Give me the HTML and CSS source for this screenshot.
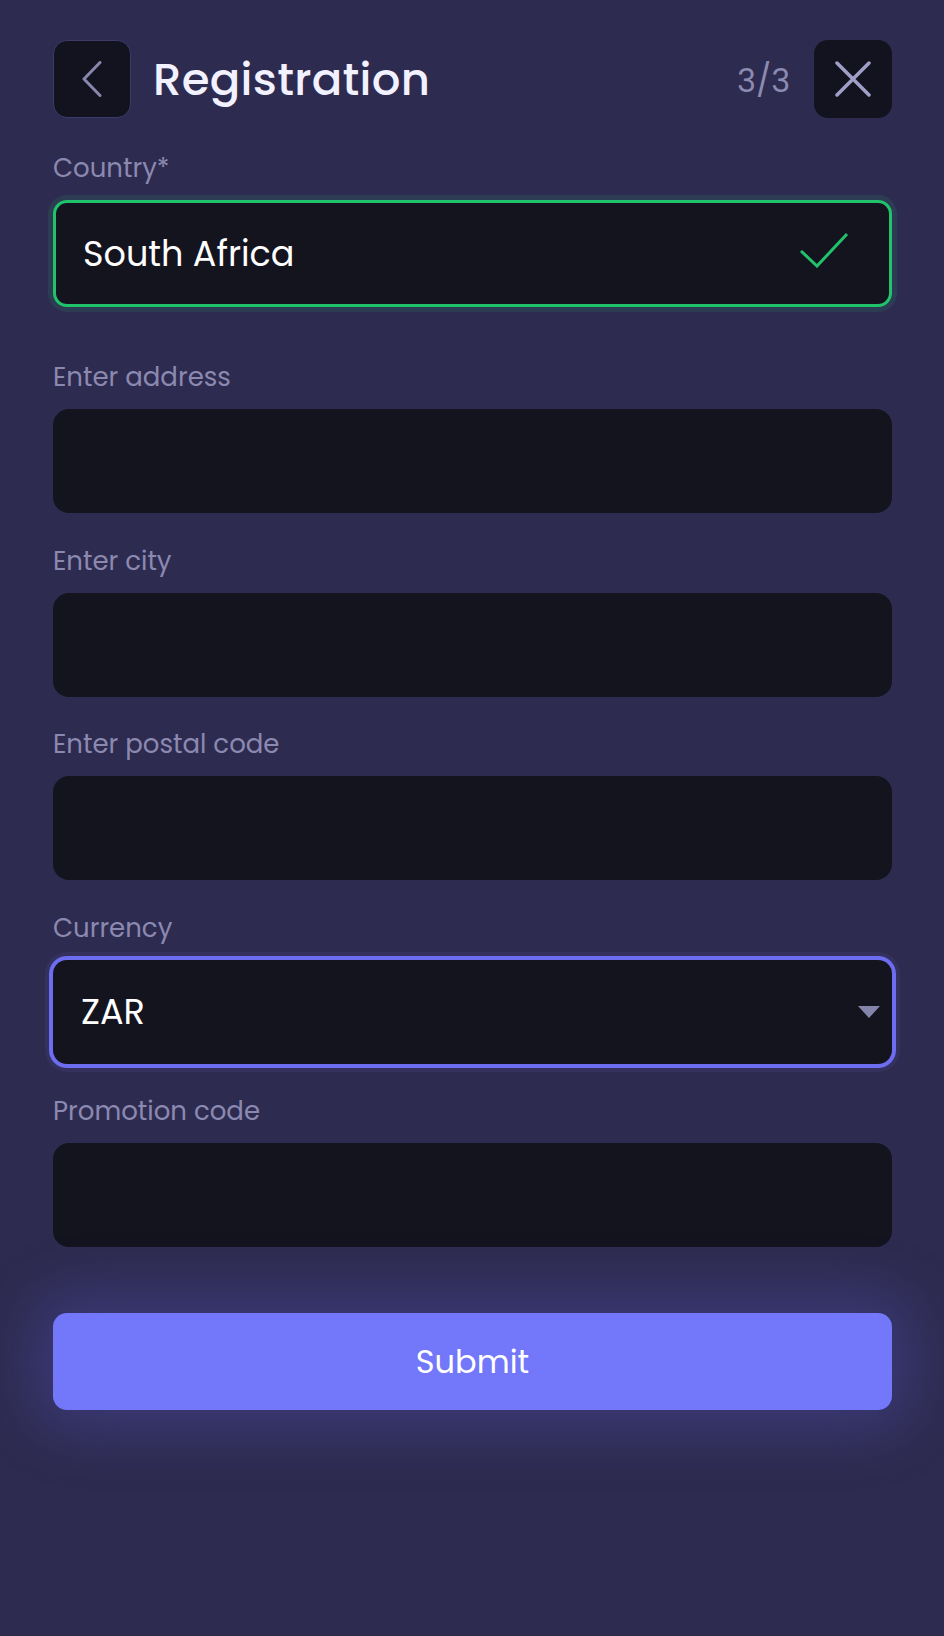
FILE: index.html
```html
<!DOCTYPE html>
<html lang="en">
<head>
    <meta charset="UTF-8">
    <meta name="viewport" content="width=device-width, initial-scale=1.0">
    <title>Registration</title>
    <link rel="stylesheet" href="styles.css">
</head>
<body>
    <div class="page">
        <header class="top-bar">
            <button class="icon-btn back-btn" type="button" aria-label="Back">
                <svg width="20" height="36" viewBox="0 0 20 36"><polyline points="18,1.5 2,18 18,34.5" fill="none" stroke="#8786ad" stroke-width="3" stroke-linecap="round" stroke-linejoin="round"/></svg>
            </button>
            <h1>Registration</h1>
            <span class="step">3/3</span>
            <button class="icon-btn close-btn" type="button" aria-label="Close">
                <svg width="36" height="36" viewBox="0 0 36 36"><path d="M2 2 L34 34 M34 2 L2 34" fill="none" stroke="#a09fc8" stroke-width="3.5" stroke-linecap="round"/></svg>
            </button>
        </header>

        <form id="registration-form">
            <div class="form-group country-group">
                <label for="country">Country*</label>
                <div class="field field-valid">
                    <input type="text" id="country" name="country" value="South Africa">
                    <svg class="check" width="50" height="36" viewBox="0 0 50 36"><polyline points="2,19 18,34 48,2" fill="none" stroke="#20c36c" stroke-width="3"/></svg>
                </div>
            </div>

            <div class="form-group">
                <label for="address">Enter address</label>
                <div class="field"><input type="text" id="address" name="address"></div>
            </div>

            <div class="form-group">
                <label for="city">Enter city</label>
                <div class="field"><input type="text" id="city" name="city"></div>
            </div>

            <div class="form-group">
                <label for="postal">Enter postal code</label>
                <div class="field"><input type="text" id="postal" name="postal"></div>
            </div>

            <div class="form-group">
                <label for="currency">Currency</label>
                <div class="field field-focus">
                    <input type="text" id="currency" name="currency" value="ZAR" readonly>
                    <svg class="caret" width="22" height="12" viewBox="0 0 22 12"><polygon points="0,0 22,0 11,12" fill="#8584ab"/></svg>
                </div>
            </div>

            <div class="form-group">
                <label for="promo">Promotion code</label>
                <div class="field"><input type="text" id="promo" name="promo"></div>
            </div>

            <button class="submit-btn" type="submit">Submit</button>
        </form>
    </div>
</body>
</html>
```

FILE: styles.css
```css
/* Global Styles */
html, body {
    margin: 0;
    padding: 0;
}

body {
    font-family: 'Poppins', 'Inter', sans-serif;
    background-color: #2e2b50;
    color: #fff;
    min-height: 1636px;
}

.page {
    padding: 40px 52px 0 53px;
}

/* Header */
.top-bar {
    display: flex;
    align-items: center;
    height: 78px;
}

.icon-btn {
    width: 78px;
    height: 78px;
    border-radius: 14px;
    background: #13131f;
    border: none;
    padding: 0;
    display: flex;
    align-items: center;
    justify-content: center;
}

.back-btn {
    border: 1px solid #3c3a6a;
}

.top-bar h1 {
    margin: 2px 0 0 22px;
    font-size: 45px;
    font-weight: 500;
    color: #f2f1ff;
    letter-spacing: 0.3px;
    flex: 1;
}

.step {
    font-size: 32px;
    color: #8c8ab0;
    margin: 3px 24px 0 0;
}

/* Form */
form {
    margin-top: 31px;
}

.form-group {
    margin-bottom: 28.5px;
}

.country-group {
    margin-bottom: 51px;
}

.form-group label {
    display: block;
    font-size: 26px;
    line-height: 32px;
    color: #8b89b0;
    padding-top: 3px;
    margin-bottom: 16px;
}

.field {
    height: 104px;
    box-sizing: border-box;
    background: #14141f;
    border-radius: 16px;
    display: flex;
    align-items: center;
    padding: 0 12px 0 28px;
}

.field input {
    flex: 1;
    min-width: 0;
    background: transparent;
    border: none;
    outline: none;
    font-family: inherit;
    font-size: 35px;
    color: #fff;
    padding: 0;
}

.field-valid {
    height: 107px;
    border: 3px solid #20c36c;
    border-radius: 14px;
    padding-left: 27px;
    padding-right: 40px;
    box-shadow: 0 0 0 5px rgba(32, 195, 108, 0.12);
}

.field-focus {
    border-radius: 14px;
    box-shadow: 0 0 0 4px #6c6df0, 0 0 0 8px rgba(108, 109, 240, 0.1);
}

.check {
    margin-top: -8px;
}

/* Submit */
.submit-btn {
    display: block;
    width: 100%;
    height: 97px;
    margin-top: 66px;
    border: none;
    border-radius: 14px;
    background: #7377f9;
    color: #fff;
    font-family: inherit;
    font-size: 32px;
    box-shadow: 0 0 60px 18px rgba(100, 104, 240, 0.25);
}
```
